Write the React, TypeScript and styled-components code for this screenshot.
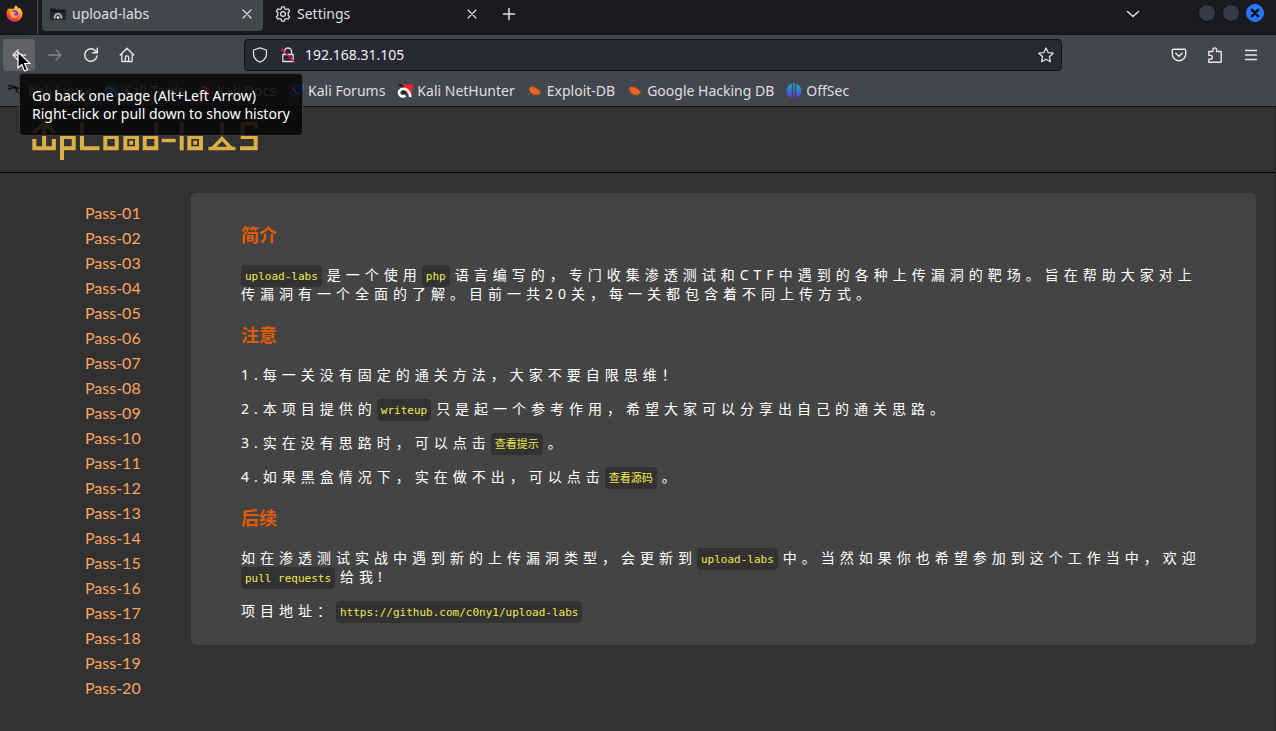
import React from 'react';
import styled, { createGlobalStyle, css } from 'styled-components';

const uiFont = `"Noto Sans", "Noto Sans CJK SC", sans-serif`;

const GlobalStyle = createGlobalStyle`
  * { box-sizing: border-box; }
  html, body { margin: 0; height: 100%; background: #323232; }
  #root { min-height: 100%; display: flex; flex-direction: column; }
`;

/* ---------- browser chrome ---------- */

const Window = styled.div`
  flex: 1;
  display: flex;
  flex-direction: column;
  font: 14px/18px ${uiFont};
  color: #dfdfe1;
`;

const TabStrip = styled.header`
  display: flex;
  align-items: flex-start;
  height: 35px;
  background: #1a1b20;
  border-bottom: 1px solid #121317;
`;

const FirefoxView = styled.button`
  width: 38px;
  height: 34px;
  padding: 0 0 8px 6px;
  border: 0;
  border-right: 1px solid #4b4d54;
  margin-right: 4px;
  background: none;
  display: flex;
  align-items: center;
`;

const Tab = styled.div<{ $active?: boolean }>`
  display: flex;
  align-items: center;
  width: 221px;
  height: 31px;
  padding: 0 8px 4px 8px;
  margin-right: 4px;
  border-radius: 0 0 4px 4px;
  background: ${p => (p.$active ? '#44464d' : 'transparent')};
`;

const TabTitle = styled.span`
  flex: 1;
  margin-left: 6px;
  font-size: 14px;
  line-height: 18px;
`;

const TabClose = styled.button`
  display: flex;
  padding: 0;
  width: 16px;
  height: 16px;
  border: 0;
  background: none;
  color: inherit;
`;

const StripButton = styled.button<{ $push?: boolean }>`
  display: flex;
  align-items: center;
  justify-content: center;
  width: 34px;
  height: 27px;
  padding: 0;
  border: 0;
  background: none;
  color: inherit;
  ${p => p.$push && css`margin-left: auto;`}
`;

const WindowButtons = styled.div`
  display: flex;
  gap: 6px;
  padding: 4px 12px 0 48px;
`;

const WindowButton = styled.button<{ $close?: boolean }>`
  display: flex;
  align-items: center;
  justify-content: center;
  width: 18px;
  height: 18px;
  padding: 0;
  border-radius: 50%;
  border: 1px solid ${p => (p.$close ? '#2777ff' : '#0d0e12')};
  background: ${p => (p.$close ? '#2777ff' : '#363a46')};
  color: #0a0d14;
`;

const Toolbar = styled.nav`
  display: flex;
  align-items: center;
  gap: 4px;
  height: 40px;
  padding: 0 9px 0 3px;
  background: #44464d;
`;

const ToolButton = styled.button<{ $hover?: boolean; $dim?: boolean }>`
  display: flex;
  align-items: center;
  justify-content: center;
  width: 32px;
  height: 32px;
  padding: 0;
  border: 0;
  border-radius: 4px;
  background: ${p => (p.$hover ? '#606167' : 'transparent')};
  color: ${p => (p.$dim ? '#85868b' : '#e6e6e8')};
`;

const BackWrap = styled.div`
  position: relative;
`;

const Pointer = styled.svg`
  position: absolute;
  left: 14px;
  top: 12px;
  z-index: 3;
`;

const Tooltip = styled.div`
  position: absolute;
  left: 16px;
  top: 34px;
  z-index: 2;
  padding: 13px 12px 12px;
  white-space: nowrap;
  color: #fff;
  border: 1px solid #3a3a3c;
  border-radius: 4px;
  background: rgba(6, 6, 6, 0.87);
`;

const AddressBar = styled.div`
  flex: 1;
  display: flex;
  align-items: center;
  gap: 12px;
  height: 32px;
  margin: 0 97px;
  padding: 0 7px;
  border: 1px solid #101217;
  border-radius: 4px;
  background: #272934;
`;

const AddressInput = styled.input`
  flex: 1;
  min-width: 0;
  margin-left: -3px;
  padding: 0;
  border: 0;
  outline: 0;
  background: none;
  color: #f0f0f2;
  font: 14px/18px ${uiFont};
`;

const Bookmarks = styled.nav`
  display: flex;
  gap: 12px;
  height: 32px;
  padding: 0 8px;
  align-items: center;
  background: #44464d;
  border-bottom: 1px solid #0f1013;
`;

const Bookmark = styled.a`
  display: flex;
  align-items: center;
  gap: 4px;
  color: inherit;
  text-decoration: none;
  white-space: nowrap;
`;

/* ---------- page ---------- */

const Page = styled.div`
  flex: 1;
  background: #323232;
  border-right: 1px solid #262626;
`;

const PageHeader = styled.header`
  height: 66px;
  padding: 13px 0 0 31px;
  border-bottom: 1px solid #000;
`;

const Columns = styled.div`
  display: flex;
  align-items: flex-start;
  padding: 20px 19px 20px 0;
`;

const Menu = styled.ul`
  flex: none;
  width: 191px;
  margin: 0;
  padding: 7px 0 0 85px;
  list-style: none;
  font: 16px/25px Lato, sans-serif;
`;

const MenuLink = styled.a`
  color: #fba35f;
  text-decoration: none;
`;

const Panel = styled.main`
  flex: 1;
  min-width: 0;
  padding: 10px 50px;
  border-radius: 5px;
  background: #444;
  color: #fff;
  font: 14px/19px "Noto Sans", "Noto Sans CJK SC", sans-serif;
  letter-spacing: 5px;
`;

const Heading = styled.h3`
  margin: 18px 0;
  font: bold 18px/26px "Noto Sans CJK SC", sans-serif;
  letter-spacing: 0;
  color: #e35b00;
`;

const Text = styled.p`
  margin: 15px 0;
`;

const Code = styled.code`
  margin-right: 5px;
  padding: 5px 4px 4px;
  border-radius: 4px;
  background: #323232;
  color: #f0e74e;
  font: 11px/11px "DejaVu Sans Mono", "Noto Sans CJK SC", monospace;
  letter-spacing: 0;
`;

/* ---------- icons ---------- */

type IconProps = { children: React.ReactNode; size?: number; width?: number };
const Icon = ({ children, size = 16, width = 1.3 }: IconProps) => (
  <svg width={size} height={size} viewBox="0 0 16 16" fill="none" stroke="currentColor"
    strokeWidth={width} strokeLinecap="round" strokeLinejoin="round" aria-hidden="true">
    {children}
  </svg>
);

const CloseIcon = () => <Icon width={1.2}><path d="M4 4l8 8M12 4l-8 8" /></Icon>;

const FirefoxIcon = () => (
  <svg width="17" height="17" viewBox="0 0 16 16" aria-hidden="true">
    <defs>
      <linearGradient id="fx" x1="0.8" y1="0" x2="0.3" y2="1">
        <stop offset="0" stopColor="#ffe74a" />
        <stop offset="0.45" stopColor="#ff9a1f" />
        <stop offset="0.75" stopColor="#ff4040" />
        <stop offset="1" stopColor="#e8247c" />
      </linearGradient>
    </defs>
    <path fill="url(#fx)" d="M9.6 0.3c.3 1.4 1.6 2 2.6 3.1l.5-.9c1.600 1.300 2.900 3.400 2.900 6A7.500 7.300 0 0 1 .5 8.300C.5 6.200 1.200 4.400 2.500 3l.3 1.200 1-1.900.5 1.500C6 3.400 7 3.600 7.700 4 7.600 2.500 8.300 1.100 9.600.3z" />
    <circle cx="8" cy="8.500" r="3.600" fill="#7a3fe0" />
    <path fill="#ffb02e" d="M3.800 6.200c1.500-.9 2.700-.2 3.700.6 .8.1 1.500 0 1.900.2-.3.900-1.600.9-2 1.800.3 1.400 2.300 1.600 3.800.7-.6 2-2 3-3.500 3-2.400 0-4.300-2.600-3.900-6.300z" />
  </svg>
);

const SiteIcon = () => (
  <svg width="16" height="16" viewBox="0 0 16 16" aria-hidden="true">
    <path fill="#17191d" d="M0 3.500V2.500h5l1 1h9.500V14H.5z" />
    <path fill="#24272c" d="M0 6h16l-.6 8H.6z" />
    <path fill="none" stroke="#a9abae" strokeWidth="2" d="M5 12.500a3.300 3.300 0 1 1 6 0" />
    <path fill="#d0d1d3" d="M8 9.500l2 2H9v1.500H7v-1.500H6z" />
  </svg>
);

const GearIcon = () => (
  <Icon width={1.3}>
    <circle cx="8" cy="8" r="2.400" />
    <path d="M6.700.8h2.600l.5 2 1.300.7 2-.6 1.500 2.300-1.400 1.500v2.600l1.400 1.500-1.500 2.300-2-.6-1.300.7-.5 2H6.700l-.5-2-1.300-.7-2 .6-1.500-2.300 1.400-1.500V6.700L1.400 5.200l1.500-2.300 2 .6 1.300-.7z" />
  </Icon>
);

const KaliIcon = () => (
  <Icon width={1.4}>
    <g stroke="#0c0d10">
      <path d="M0 3c4-1 7 0 9 2M1 6c3-1.500 5-1.500 8-1M9 5c-2 3 0 4 3 4.500s3 2.500 3.500 4.500M9 5l4 .8 1.500 1.500" />
    </g>
  </Icon>
);

const ToolsIcon = () => (
  <svg width="16" height="16" viewBox="0 0 16 16" aria-hidden="true">
    <circle cx="8" cy="8" r="7.500" fill="#2777ff" />
    <path d="M2 6c4-2 8-1 9 2s2 3 3 5" fill="none" stroke="#fff" strokeWidth="1.800" />
  </svg>
);

const DocsIcon = () => (
  <svg width="16" height="16" viewBox="0 0 16 16" aria-hidden="true">
    <path d="M2 1h12v14H2z" fill="#e8202e" />
    <path d="M5 4c4 0 6 1 5 4s1 2 2 4" fill="none" stroke="#fff" strokeWidth="1.500" />
  </svg>
);

const ForumsIcon = () => (
  <svg width="16" height="16" viewBox="0 0 16 16" aria-hidden="true">
    <path d="M5 1h11l-1.500 13H1z" fill="#2777ff" />
    <path d="M1 1.500l6 3.500 3 5 5 4-6-2-4-4z" fill="#e8e8ea" stroke="#15161a" strokeWidth="0.800" />
  </svg>
);

const NetHunterIcon = () => (
  <svg width="16" height="16" viewBox="0 0 16 16" aria-hidden="true">
    <path d="M4.500 1.500H16L14.200 14 8 8z" fill="#ff1f35" />
    <path d="M1.500 1.500l3 1 2.500 2" stroke="#101114" strokeWidth="1.500" fill="none" />
    <path d="M13.500 14C12.500 9 10 5.800 6.500 5.800 3 5.800 1.200 9 2.400 11.400c1.200 2.200 4.300 2.600 6.100 1.200" fill="none" stroke="#fff" strokeWidth="2.600" />
    <path d="M4.500 9.800c1.500-1.500 3.500-1 4.300.7" fill="none" stroke="#15161a" strokeWidth="1.300" />
  </svg>
);

const BugIcon = () => (
  <svg width="16" height="16" viewBox="0 0 16 16" aria-hidden="true">
    <path d="M2.500 4.500c2-1.200 4-.8 6 .2 2.500 1 4.500 2.800 4.700 5.500-1.700 2-4.700 2-6.700 1-2.500-1-4.500-3.700-4-6.700z" fill="#f0641e" />
    <path d="M6 5L4 3M9.500 5.500L8.500 3.500M12 7.500l2.500-.5M13 9.500l2 1M3 7L.5 7.500M4 9.500L1.500 11M7 11l-1 2M10.500 11.500l.5 1.500" stroke="#a8583a" strokeWidth="0.700" />
  </svg>
);

const OffSecIcon = () => (
  <svg width="16" height="16" viewBox="0 0 16 16" aria-hidden="true">
    <defs>
      <linearGradient id="os" x1="0" y1="0" x2="0" y2="1">
        <stop offset="0" stopColor="#12b5c9" />
        <stop offset="0.500" stopColor="#2f74d8" />
        <stop offset="1" stopColor="#6a2bd0" />
      </linearGradient>
    </defs>
    <path fill="url(#os)" d="M5.800 1v13.500C2.500 13.800.5 11 .5 7.800S2.500 1.700 5.800 1zM10.200 1v13.500c3.300-.7 5.300-3.500 5.300-6.700S13.500 1.700 10.200 1zM7.200.3h1.600v15.400H7.200z" />
  </svg>
);

const Logo = () => (
  <svg width="228" height="40" viewBox="31 120 228 40" fill="none" stroke="#dcae46" strokeWidth="4" role="img" aria-label="upload-labs logo">
    <path d="M34.300 139v9.300h19.600V139M44.100 123v25" />
    <path d="M33.500 133l10.600-10.200L54.700 133" strokeWidth="3.500" />
    <path d="M62 160v-23h11.700v11.300H62" />
    <path d="M82 122v26.300h17.500" />
    <rect x="105.300" y="137" width="11.400" height="11.300" />
    <rect x="125.300" y="137" width="11.700" height="11.300" />
    <rect x="129.200" y="140.700" width="4" height="4" fill="#dcae46" stroke="none" />
    <path d="M156.300 122v26.300h-11.600V137h11.600" />
    <path d="M161.700 140.500h14" strokeWidth="3.500" />
    <path d="M181.700 122v28.300" />
    <rect x="189.300" y="137" width="11.700" height="11.300" />
    <rect x="193.200" y="140.700" width="4" height="4" fill="#dcae46" stroke="none" />
    <path d="M222 122v14" />
    <path d="M212.500 148.500L222 138.500l9.500 10zM208.500 148.500h27" strokeWidth="3.500" />
    <path d="M255.700 129v-5.500h-13V137h13v11.300H240" />
  </svg>
);

const bookmarks: [string, React.ReactNode][] = [
  ['Kali Linux', <KaliIcon />],
  ['Kali Tools', <ToolsIcon />],
  ['Kali Docs', <DocsIcon />],
  ['Kali Forums', <ForumsIcon />],
  ['Kali NetHunter', <NetHunterIcon />],
  ['Exploit-DB', <BugIcon />],
  ['Google Hacking DB', <BugIcon />],
  ['OffSec', <OffSecIcon />],
];

const passes = Array.from({ length: 20 }, (_, i) => `Pass-${String(i + 1).padStart(2, '0')}`);

export default function App() {
  return (
    <Window>
      <GlobalStyle />
      <TabStrip>
        <FirefoxView aria-label="Firefox View"><FirefoxIcon /></FirefoxView>
        <Tab $active>
          <SiteIcon />
          <TabTitle>upload-labs</TabTitle>
          <TabClose aria-label="Close tab"><CloseIcon /></TabClose>
        </Tab>
        <Tab>
          <GearIcon />
          <TabTitle>Settings</TabTitle>
          <TabClose aria-label="Close tab"><CloseIcon /></TabClose>
        </Tab>
        <StripButton aria-label="New tab"><Icon width={1.5}><path d="M8 2.500v11M2.500 8h11" /></Icon></StripButton>
        <StripButton $push aria-label="List all tabs"><Icon width={1.500}><path d="M2.500 5.500L8 10.500l5.500-5" /></Icon></StripButton>
        <WindowButtons>
          <WindowButton aria-label="Minimize" />
          <WindowButton aria-label="Maximize" />
          <WindowButton $close aria-label="Close">
            <Icon size={14} width={3}><path d="M4.500 4.500l7 7M11.500 4.500l-7 7" /></Icon>
          </WindowButton>
        </WindowButtons>
      </TabStrip>

      <Toolbar>
        <BackWrap>
          <ToolButton $hover aria-label="Back" aria-describedby="back-tip">
            <Icon><path d="M14.500 8H2M7 3L2 8l5 5" /></Icon>
          </ToolButton>
          <Pointer width="14" height="22" viewBox="0 0 14 22" aria-hidden="true">
            <path d="M1 1v16l3.800-3.500L7.500 20l3-1.300-2.800-6.200H13z" fill="#000" stroke="#fff" strokeWidth="1.200" />
          </Pointer>
          <Tooltip id="back-tip" role="tooltip">
            Go back one page (Alt+Left Arrow)<br />
            Right-click or pull down to show history
          </Tooltip>
        </BackWrap>
        <ToolButton $dim aria-label="Forward"><Icon><path d="M1.500 8H14M9 3l5 5-5 5" /></Icon></ToolButton>
        <ToolButton aria-label="Reload">
          <Icon width={1.5}><path d="M14 9A6.200 6.200 0 1 1 12.300 3.700l1.500 1.500M14.300 1.200v4.600H9.700" /></Icon>
        </ToolButton>
        <ToolButton aria-label="Home">
          <Icon><path d="M1.200 8L8 1.200 14.800 8M2.800 7v7.500h10.400V7M6.300 14.500V10.500a1.700 1.700 0 0 1 3.400 0v4" /></Icon>
        </ToolButton>
        <AddressBar>
          <Icon><path d="M8 .8L14.500 3v3.500c0 4-2.300 7-6.500 8.700C3.800 13.500 1.500 10.500 1.500 6.500V3z" /></Icon>
          <Icon>
            <path d="M2.800 7.500h10.400v7H2.800zM4.500 7.300V4.500a3.500 3.500 0 0 1 7 0v2.800" />
            <path d="M1.500 2l13 13" stroke="#f5134e" strokeWidth="1.500" />
          </Icon>
          <AddressInput aria-label="Address" defaultValue="192.168.31.105" />
          <Icon><path d="M8 .9l2.100 4.700 5.100.6-3.800 3.500 1 5L8 12.200l-4.400 2.500 1-5L.8 6.200l5.100-.6z" /></Icon>
        </AddressBar>
        <ToolButton aria-label="Save to Pocket">
          <Icon width={1.400}><path d="M2.200 2.300h11.600c.5 0 .9.4.9.9V7a6.700 6.700 0 0 1-13.400 0V3.200c0-.5.4-.9.900-.9zM4.800 6.300L8 9.300l3.200-3" /></Icon>
        </ToolButton>
        <ToolButton aria-label="Extensions">
          <Icon width={1.400}><path d="M1.800 4.500h4V2.800a1.900 1.900 0 0 1 3.800 0v1.700h4.600v10.700H1.800v-3h1.700a1.900 1.900 0 0 0 0-3.800H1.800z" /></Icon>
        </ToolButton>
        <ToolButton aria-label="Open application menu"><Icon width={1.400}><path d="M2.500 3.500h11M2.500 8h11M2.500 12.500h11" /></Icon></ToolButton>
      </Toolbar>

      <Bookmarks aria-label="Bookmarks">
        {bookmarks.map(([name, icon]) => (
          <Bookmark key={name} href="#">{icon}{name}</Bookmark>
        ))}
      </Bookmarks>

      <Page lang="zh-CN">
        <PageHeader><Logo /></PageHeader>
        <Columns>
          <Menu>
            {passes.map(name => <li key={name}><MenuLink href={`#${name}`}>{name}</MenuLink></li>)}
          </Menu>
          <Panel>
            <Heading>简介</Heading>
            <Text><Code>upload-labs</Code>是一个使用<Code>php</Code>语言编写的，专门收集渗透测试和CTF中遇到的各种上传漏洞的靶场。旨在帮助大家对上传漏洞有一个全面的了解。目前一共20关，每一关都包含着不同上传方式。</Text>
            <Heading>注意</Heading>
            <Text>1.每一关没有固定的通关方法，大家不要自限思维！</Text>
            <Text>2.本项目提供的<Code>writeup</Code>只是起一个参考作用，希望大家可以分享出自己的通关思路。</Text>
            <Text>3.实在没有思路时，可以点击<Code>查看提示</Code>。</Text>
            <Text>4.如果黑盒情况下，实在做不出，可以点击<Code>查看源码</Code>。</Text>
            <Heading>后续</Heading>
            <Text>如在渗透测试实战中遇到新的上传漏洞类型，会更新到<Code>upload-labs</Code>中。当然如果你也希望参加到这个工作当中，欢迎<Code>pull requests</Code>给我!</Text>
            <Text>项目地址：<Code>https://github.com/c0ny1/upload-labs</Code></Text>
          </Panel>
        </Columns>
      </Page>
    </Window>
  );
}
